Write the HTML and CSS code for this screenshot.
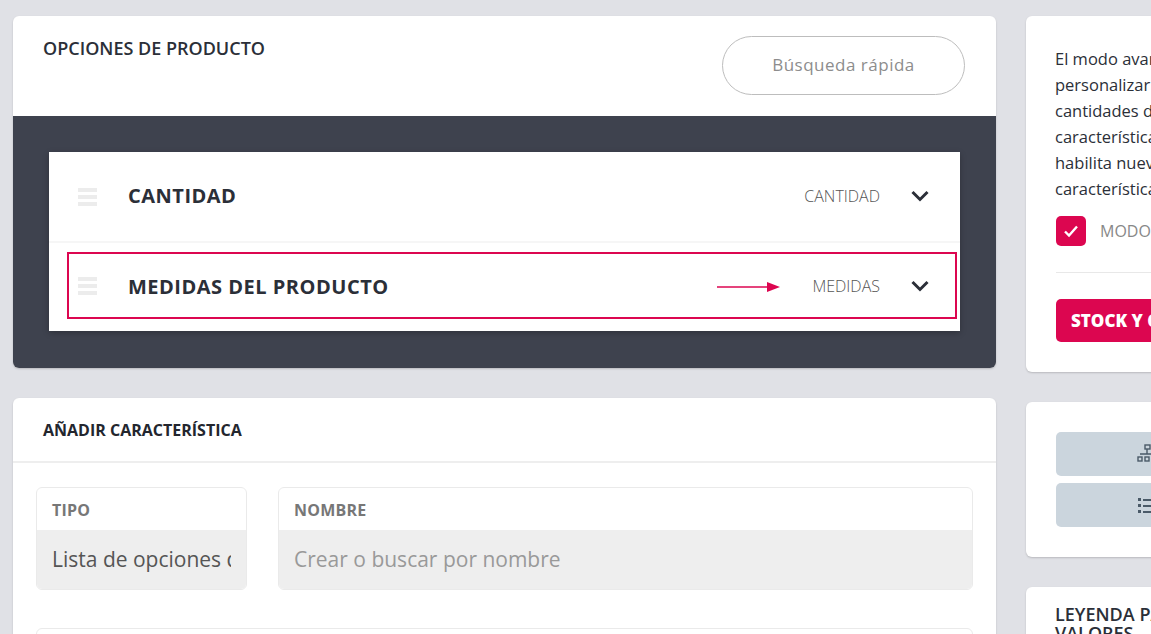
FILE: index.html
```html
<!DOCTYPE html>
<html lang="es">
<head>
  <meta charset="UTF-8">
  <title>Opciones de producto</title>
  <link rel="stylesheet" href="styles.css">
</head>
<body>
  <div class="layout">
    <div class="main-col">
      <section class="card">
        <div class="options-head">
          <h2 class="options-title">OPCIONES DE PRODUCTO</h2>
          <div class="quick-search">Búsqueda rápida</div>
        </div>
        <div class="options-body">
          <div class="option-list">
            <div class="option-row">
              <span class="grip"><i></i><i></i><i></i></span>
              <span class="option-name">CANTIDAD</span>
              <span class="option-type">CANTIDAD</span>
              <svg class="chevron" width="20" height="12" viewBox="0 0 20 12"><path d="M2.5 2 10 9.5 17.5 2" fill="none" stroke="#2b2f38" stroke-width="3"/></svg>
            </div>
            <div class="option-row option-row-alt">
              <span class="grip"><i></i><i></i><i></i></span>
              <span class="option-name">MEDIDAS DEL PRODUCTO</span>
              <span class="option-type">MEDIDAS</span>
              <svg class="chevron" width="20" height="12" viewBox="0 0 20 12"><path d="M2.5 2 10 9.5 17.5 2" fill="none" stroke="#2b2f38" stroke-width="3"/></svg>
              <div class="highlight"></div>
              <svg class="arrow" width="64" height="12" viewBox="0 0 64 12"><path d="M0 6H52" stroke="#dc0650" stroke-width="1.5"/><path d="M50 1 63 6 50 11Z" fill="#dc0650"/></svg>
            </div>
          </div>
        </div>
      </section>

      <section class="card">
        <h3 class="add-title">AÑADIR CARACTERÍSTICA</h3>
        <div class="add-body">
          <div class="field-row">
            <div class="field field-type">
              <div class="field-label">TIPO</div>
              <div class="field-input"><span class="field-clip">Lista de opciones de producto</span></div>
            </div>
            <div class="field field-name">
              <div class="field-label">NOMBRE</div>
              <div class="field-input field-empty">Crear o buscar por nombre</div>
            </div>
          </div>
          <div class="next-box"></div>
        </div>
      </section>
    </div>

    <aside class="side-col">
      <section class="card side-card">
        <p class="side-text">El modo avanzado te permite<br>personalizar los precios y las<br>cantidades de cada una de las<br>características. También te<br>habilita nuevos tipos de<br>características.</p>
        <div class="check-row">
          <span class="check"><svg width="16" height="14" viewBox="0 0 16 14"><path d="M2 7.5 6 11.5 14 2.5" fill="none" stroke="#fff" stroke-width="2.4"/></svg></span>
          <span class="check-label">MODO AVANZADO</span>
        </div>
        <div class="side-rule"></div>
        <div class="stock-btn">STOCK Y CANTIDADES</div>
      </section>

      <section class="card side-card side-actions">
        <div class="grey-btn">
          <svg width="20" height="20" viewBox="0 0 20 20"><g fill="none" stroke="#4a5a68" stroke-width="1.4"><rect x="8" y="1" width="5" height="4"/><path d="M10 5v5M3 10h15"/><rect x="1" y="13" width="4" height="4"/><rect x="8" y="13" width="4" height="4"/><rect x="15" y="13" width="4" height="4"/></g></svg>
        </div>
        <div class="grey-btn">
          <svg width="20" height="20" viewBox="0 0 20 20"><g fill="#4a5a68"><rect x="1" y="3" width="3" height="3"/><rect x="1" y="9" width="3" height="3"/><rect x="1" y="15" width="3" height="3"/><rect x="6" y="4" width="14" height="2"/><rect x="6" y="10" width="14" height="2"/><rect x="6" y="16" width="14" height="2"/></g></svg>
        </div>
      </section>

      <section class="card side-card legend">
        <h3 class="legend-title">LEYENDA PARA<br>VALORES</h3>
      </section>
    </aside>
  </div>
</body>
</html>
```

FILE: styles.css
```css
* {
  box-sizing: border-box;
  margin: 0;
  padding: 0;
}
html, body {
  height: 100%;
  overflow: hidden;
}
body {
  font-family: "Open Sans", sans-serif;
  background: #e0e1e6;
  color: #2b2f38;
}
.layout {
  display: grid;
  grid-template-columns: 983px 320px;
  gap: 30px;
  padding: 16px 0 0 13px;
  width: 1400px;
}
.main-col, .side-col {
  display: flex;
  flex-direction: column;
  gap: 30px;
}
.card {
  background: #fff;
  border-radius: 6px;
  overflow: hidden;
  box-shadow: 0 1px 2px rgba(0, 0, 0, 0.18);
}
.options-head {
  height: 100px;
  padding: 20px 31px 0 30px;
  display: flex;
  justify-content: space-between;
  align-items: flex-start;
}
.options-title {
  font-size: 18px;
  font-weight: 600;
  line-height: 24px;
}
.quick-search {
  width: 243px;
  height: 59px;
  border: 1px solid #bdbdbd;
  border-radius: 30px;
  text-align: center;
  line-height: 56px;
  font-size: 17px;
  letter-spacing: 0.5px;
  color: #8d8d8d;
}
.options-body {
  background: #3e424e;
  padding: 36px;
  height: 252px;
}
.option-list {
  background: #fff;
  box-shadow: 0 2px 6px rgba(0, 0, 0, 0.25);
}
.option-row {
  position: relative;
  display: flex;
  align-items: center;
  height: 89px;
  padding: 0 30px 0 29px;
}
.option-row-alt {
  height: 90px;
  border-top: 2px solid #f6f6f6;
}
.option-row-alt .grip {
  margin-bottom: 2px;
}
.grip {
  display: flex;
  flex-direction: column;
  gap: 3px;
  width: 50px;
}
.grip i {
  display: block;
  width: 19px;
  height: 4px;
  background: #ececec;
}
.option-name {
  flex: 1;
  font-size: 20px;
  font-weight: 700;
  letter-spacing: 0.5px;
  margin-bottom: 2px;
}
.option-type {
  font-size: 16px;
  font-weight: 300;
  color: #555;
  margin-right: 30px;
  margin-bottom: 2px;
}
.chevron {
  margin-bottom: 2px;
}
.highlight {
  position: absolute;
  left: 18px;
  top: 9px;
  width: 890px;
  height: 67px;
  border: 2px solid #dc0650;
}
.arrow {
  position: absolute;
  left: 668px;
  top: 38px;
}
.add-title {
  font-size: 16px;
  font-weight: 700;
  color: #23262e;
  line-height: 22px;
  padding: 21px 30px 20px;
  border-bottom: 2px solid #eee;
  height: 65px;
}
.add-body {
  padding: 24px 23px 0;
}
.field-row {
  display: flex;
  gap: 31px;
}
.field {
  border: 1px solid #eaeaea;
  border-radius: 6px;
  overflow: hidden;
  height: 103px;
}
.field-type {
  width: 211px;
}
.field-name {
  flex: 1;
}
.field-label {
  height: 42px;
  padding: 0 15px;
  line-height: 44px;
  font-size: 16px;
  font-weight: 700;
  letter-spacing: 0.2px;
  color: #777;
}
.field-input {
  height: 60px;
  background: #eee;
  padding: 0 15px;
  line-height: 58px;
  font-size: 21px;
  color: #555;
  white-space: nowrap;
}
.field-clip {
  display: block;
  overflow: hidden;
}
.field-empty {
  color: #999;
}
.next-box {
  margin-top: 38px;
  height: 120px;
  border: 1px solid #eaeaea;
  border-radius: 6px;
}
.side-card {
  padding: 30px 30px 30px 29px;
}
.side-text {
  font-size: 16.5px;
  line-height: 26px;
  white-space: nowrap;
}
.check-row {
  display: flex;
  align-items: center;
  gap: 14px;
  margin-top: 14px;
  margin-left: 1px;
  white-space: nowrap;
}
.check {
  width: 30px;
  height: 30px;
  border-radius: 5px;
  background: #dc0650;
  display: flex;
  align-items: center;
  justify-content: center;
}
.check-label {
  font-size: 16px;
  color: #888;
}
.side-rule {
  height: 1px;
  background: #e8e8e8;
  margin: 26px 0 26px 1px;
}
.stock-btn {
  height: 43px;
  margin-left: 1px;
  border-radius: 5px;
  background: #dc0650;
  color: #fff;
  font-size: 17px;
  font-weight: 800;
  line-height: 43px;
  padding-left: 15px;
  white-space: nowrap;
}
.side-actions {
  display: flex;
  flex-direction: column;
  gap: 7px;
  height: 155px;
}
.grey-btn {
  height: 44px;
  margin-left: 1px;
  border-radius: 5px;
  background: #cbd5dd;
  display: flex;
  align-items: center;
  padding-left: 81px;
}
.legend-title {
  font-size: 18px;
  font-weight: 600;
  line-height: 19px;
  margin-top: -12px;
}
```
